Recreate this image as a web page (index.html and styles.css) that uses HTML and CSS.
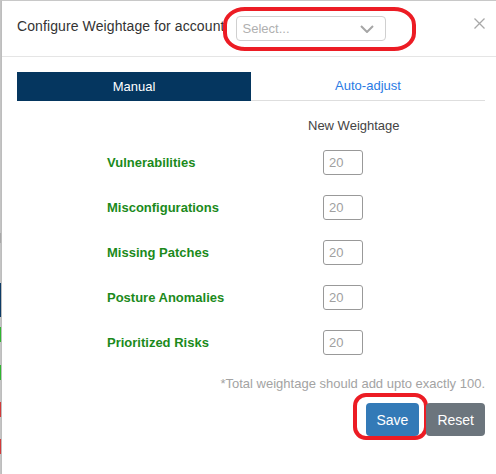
FILE: index.html
```html
<!DOCTYPE html>
<html>
<head>
<meta charset="utf-8">
<link rel="stylesheet" href="styles.css">
</head>
<body>
<div class="page">
  <div class="edge"></div>
  <div class="modal">
    <div class="modal-header">
      <h4 class="title">Configure Weightage for account</h4>
      <div class="select">
        <span class="placeholder">Select...</span>
        <svg class="chev" width="14" height="8" viewBox="0 0 14 8"><polyline points="1,1 7,7 13,1" fill="none" stroke="#a6a6a6" stroke-width="2"/></svg>
        <div class="annot annot-select"></div>
      </div>
      <button class="close" aria-label="Close"><svg width="11" height="11" viewBox="0 0 11 11"><path d="M0.5 0.5 L10.5 10.5 M10.5 0.5 L0.5 10.5" stroke="#a8a8a8" stroke-width="1.3" fill="none"/></svg></button>
    </div>
    <div class="modal-body">
      <div class="tabs">
        <div class="tab active">Manual</div>
        <div class="tab">Auto-adjust</div>
      </div>
      <div class="weights">
        <div class="col-head">New Weightage</div>
        <div class="rows">
          <div class="row"><span class="label">Vulnerabilities</span><input class="w-input" value="20"></div>
          <div class="row"><span class="label">Misconfigurations</span><input class="w-input" value="20"></div>
          <div class="row"><span class="label">Missing Patches</span><input class="w-input" value="20"></div>
          <div class="row"><span class="label">Posture Anomalies</span><input class="w-input" value="20"></div>
          <div class="row"><span class="label">Prioritized Risks</span><input class="w-input" value="20"></div>
        </div>
      </div>
      <p class="note">*Total weightage should add upto exactly 100.</p>
      <div class="actions">
        <button class="btn btn-save">Save<span class="annot annot-save"></span></button>
        <button class="btn btn-reset">Reset</button>
      </div>
    </div>
  </div>
</div>
</body>
</html>
```
FILE: styles.css
```css
html, body {
  margin: 0;
  padding: 0;
  background: #fff;
  overflow: hidden;
  font-family: "Liberation Sans", Arial, sans-serif;
}
.page {
  display: flex;
  width: 496px;
  height: 474px;
}
.edge {
  width: 1px;
  flex: none;
  background: linear-gradient(to bottom,
    #c4c4c4 0, #c4c4c4 233px,
    #a9a9a9 233px, #a9a9a9 243px,
    #c4c4c4 243px, #c4c4c4 283px,
    #0d3b66 283px, #0d3b66 317px,
    #c4c4c4 317px, #c4c4c4 327px,
    #2fb52f 327px, #2fb52f 342px,
    #c4c4c4 342px, #c4c4c4 365px,
    #2fb52f 365px, #2fb52f 380px,
    #c4c4c4 380px, #c4c4c4 402px,
    #d23a3a 402px, #d23a3a 417px,
    #c4c4c4 417px, #c4c4c4 439px,
    #d23a3a 439px, #d23a3a 454px,
    #c4c4c4 454px);
}
.modal {
  flex: none;
  width: 499px;
  box-sizing: border-box;
  border-left: 1px solid #bdbdbd;
  border-top: 1px solid #c8c8c8;
  background: #fff;
}
.modal-header {
  display: flex;
  align-items: flex-start;
  padding: 15px;
  border-bottom: 1px solid #e5e5e5;
}
.title {
  margin: 0;
  font-size: 14px;
  font-weight: normal;
  line-height: 20px;
  color: #333;
  white-space: nowrap;
  letter-spacing: 0.1px;
}
.select {
  position: relative;
  margin-left: 11px;
  width: 150px;
  height: 25px;
  box-sizing: border-box;
  border: 1px solid #d0d0d0;
  border-radius: 4px;
  display: flex;
  align-items: center;
  justify-content: space-between;
  padding: 0 11px 0 6px;
}
.placeholder {
  font-size: 13px;
  color: #b0b0b0;
}
.chev {
  display: block;
}
.annot {
  position: absolute;
  box-sizing: border-box;
  border: 4px solid #ec1c24;
  pointer-events: none;
}
.annot-select {
  left: -14px;
  top: -10px;
  width: 193px;
  height: 44px;
  border-radius: 22px / 18px;
}
.close {
  margin-left: auto;
  margin-top: 2px;
  padding: 0;
  border: 0;
  background: none;
  width: 11px;
  height: 11px;
  display: block;
}
.close svg {
  display: block;
}
.modal-body {
  padding: 15px;
}
.tabs {
  display: flex;
  height: 29px;
}
.tab {
  flex: 1;
  box-sizing: border-box;
  text-align: center;
  font-size: 13px;
  line-height: 28px;
  color: #2a7be4;
  border-bottom: 1px solid #dedede;
}
.tab.active {
  background: #05365f;
  color: #fff;
  border-bottom-color: #05365f;
  line-height: 29px;
}
.weights {
  margin: 16px 0 0 90px;
}
.col-head {
  margin-left: 201px;
  font-size: 13px;
  line-height: 17px;
  color: #444;
}
.rows {
  display: flex;
  flex-direction: column;
  gap: 20px;
  margin-top: 16px;
}
.row {
  display: flex;
  align-items: center;
}
.label {
  width: 216px;
  font-size: 13px;
  font-weight: bold;
  color: #1b8a1b;
}
.w-input {
  width: 40px;
  height: 25px;
  box-sizing: border-box;
  border: 1px solid #999;
  border-radius: 3px;
  padding: 0 0 0 5px;
  font-family: "Liberation Sans", Arial, sans-serif;
  font-size: 13px;
  color: #a0a0a0;
  background: #fff;
}
.note {
  margin: 20px 0 0;
  text-align: right;
  font-size: 13px;
  line-height: 18px;
  color: #a3a3a3;
}
.actions {
  display: flex;
  justify-content: flex-end;
  gap: 7px;
  margin-top: 10px;
}
.btn {
  position: relative;
  height: 33px;
  border: 0;
  border-radius: 4px;
  padding: 0 11px;
  font-family: "Liberation Sans", Arial, sans-serif;
  font-size: 14px;
  color: #fff;
}
.btn-save {
  background: #337ab7;
}
.btn-reset {
  background: #6c757d;
}
.annot-save {
  left: -13px;
  top: -10px;
  width: 75px;
  height: 47px;
  border-radius: 13px;
}
```
